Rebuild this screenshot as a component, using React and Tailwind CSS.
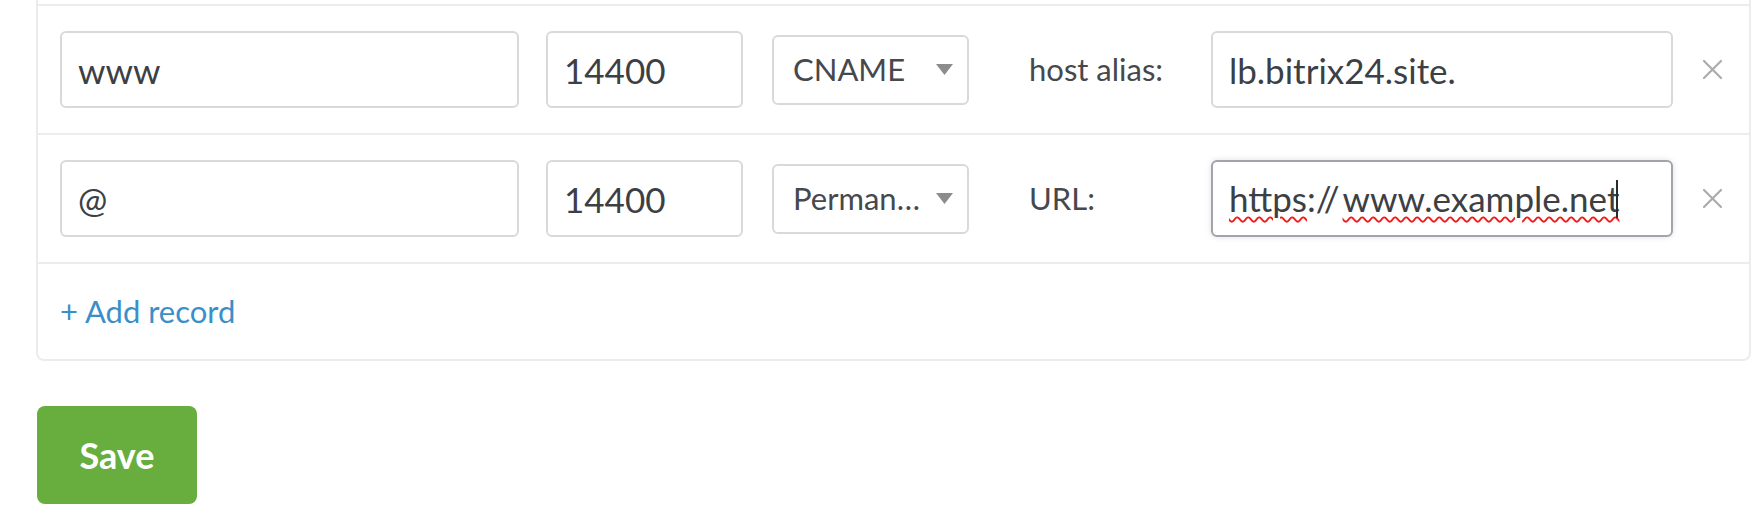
import React from 'react';

const font = { fontFamily: 'Lato, "Open Sans", sans-serif' };

const CloseIcon = () => (
  <svg width="21" height="21" viewBox="0 0 21 21" className="shrink-0">
    <path d="M2 2 L19 19 M19 2 L2 19" stroke="#ababab" strokeWidth="2.2" strokeLinecap="round" />
  </svg>
);

const SelectBox = ({ value }) => (
  <div className="ml-[29px] flex h-[70px] w-[197px] items-center justify-between rounded-md border-2 border-[#d9d9d9] bg-white pl-[19px] pr-[14px]">
    <span className="text-[31px] text-[#45484c] whitespace-nowrap">{value}</span>
    <svg width="17" height="11" viewBox="0 0 17 11">
      <path d="M0 0 H17 L8.5 11 Z" fill="#8c8c8c" />
    </svg>
  </div>
);

const TextBox = ({ value, width }) => (
  <input
    readOnly
    value={value}
    className={`h-[77px] ${width} rounded-md border-2 border-[#d9d9d9] bg-white px-[16px] text-[35px] text-[#3c4045] outline-none`}
    style={font}
  />
);

const RecordRow = ({ name, ttl, type, label, children }) => (
  <div className="flex items-center border-b-2 border-[#ececec] py-[25px] pl-[22px]">
    <TextBox value={name} width="w-[459px]" />
    <div className="ml-[27px]">
      <TextBox value={ttl} width="w-[197px]" />
    </div>
    <SelectBox value={type} />
    <div className="ml-[60px] w-[182px] text-[31px] text-[#45484c]">{label}</div>
    {children}
    <div className="ml-[29px] flex items-center">
      <CloseIcon />
    </div>
  </div>
);

export default function App() {
  return (
    <div className="min-h-[525px] bg-white" style={font}>
      <div className="ml-[36px] w-[1715px] rounded-b-lg border-2 border-t-0 border-[#ececec]">
        <div className="h-[6px] border-b-2 border-[#ececec]" />

        <RecordRow name="www" ttl="14400" type="CNAME" label="host alias:">
          <TextBox value="lb.bitrix24.site." width="w-[462px]" />
        </RecordRow>

        <RecordRow name="@" ttl="14400" type="Perman…" label="URL:">
          <div className="flex h-[77px] w-[462px] items-center rounded-md border-2 border-[#a1a5aa] bg-white px-[16px] text-[35px] text-[#3c4045] shadow-[0_0_6px_rgba(0,0,0,0.12)]">
            <span className="underline decoration-wavy decoration-[#ee1c1c] decoration-[1.5px] underline-offset-[4px]">https</span>
            <span>://</span>
            <span className="ml-[3px] underline decoration-wavy decoration-[#ee1c1c] decoration-[1.5px] underline-offset-[4px]">www.example.net</span>
            <span className="ml-[-3px] inline-block h-[38px] w-[2px] bg-[#2b2b2b]" />
          </div>
        </RecordRow>

        <div className="flex h-[95px] items-center pl-[22px]">
          <a className="cursor-pointer text-[31px] text-[#3b8fc9]">+ Add record</a>
        </div>
      </div>

      <button className="ml-[37px] mt-[45px] flex h-[98px] w-[160px] items-center justify-center rounded-lg bg-[#67ae3f] text-[36px] font-bold text-white" style={font}>
        Save
      </button>
    </div>
  );
}
